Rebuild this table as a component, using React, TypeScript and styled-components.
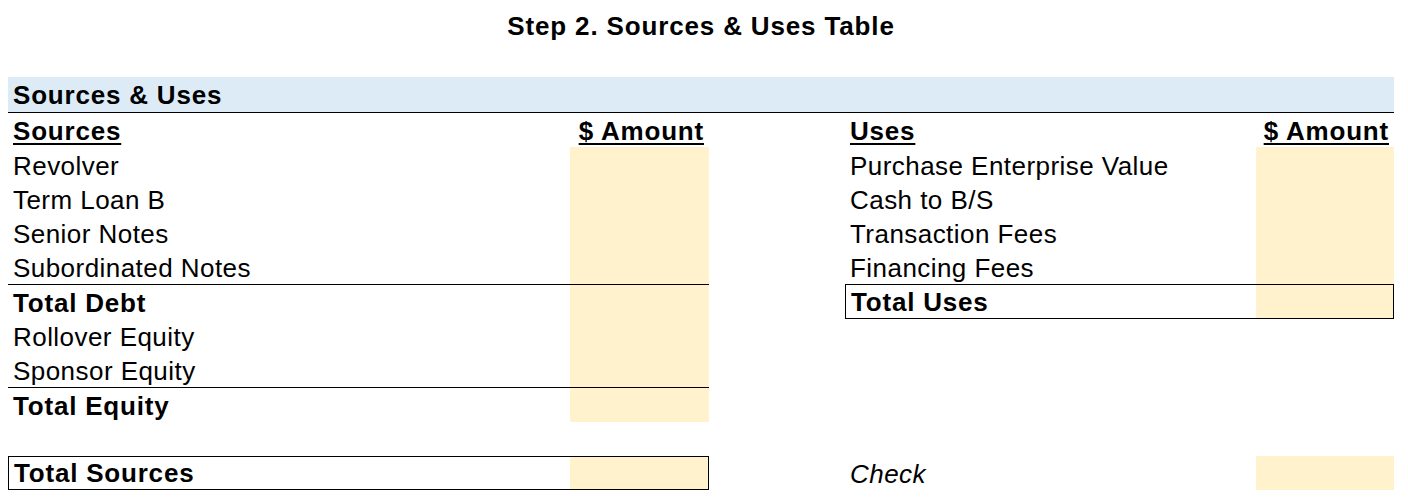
import styled, { createGlobalStyle } from "styled-components";

const GlobalStyle = createGlobalStyle`
    body {
        margin: 0;
        background: #ffffff;
        font-family: "Liberation Sans", Arial, sans-serif;
        color: #000000;
    }
`;

const Page = styled.div`
    width: 1408px;
    height: 504px;
    padding: 0 8px;
    box-sizing: border-box;
`;

const Title = styled.h1`
    margin: 0;
    width: 1386px;
    height: 77px;
    padding-top: 12px;
    box-sizing: border-box;
    text-align: center;
    font-size: 26px;
    line-height: 29px;
    font-weight: 700;
    letter-spacing: 0.85px;
`;

const Band = styled.div`
    width: 1386px;
    height: 36px;
    box-sizing: border-box;
    background: #ddebf7;
    border-bottom: 1px solid #000000;
    display: flex;
    align-items: flex-end;
    padding: 0 0 2px 5px;
    font-size: 26px;
    line-height: 29px;
    font-weight: 700;
    letter-spacing: 0.8px;
`;

const Columns = styled.div`
    display: flex;
    gap: 136px;
`;

const Panel = styled.div<{ $label: number; $amount: number }>`
    display: grid;
    grid-template-columns: ${p => p.$label}px ${p => p.$amount}px;
    grid-auto-rows: 34.3px;
`;

const Row = styled.div<{ $rule?: "top" | "box" }>`
    grid-column: 1 / -1;
    display: grid;
    grid-template-columns: subgrid;
    box-sizing: border-box;
    border-top: ${p => (p.$rule ? "1px solid #000000" : "none")};
    border-left: ${p => (p.$rule === "box" ? "1px solid #000000" : "none")};
    border-right: ${p => (p.$rule === "box" ? "1px solid #000000" : "none")};
    border-bottom: ${p => (p.$rule === "box" ? "1px solid #000000" : "none")};
`;

const Label = styled.div<{ $bold?: boolean; $italic?: boolean; $head?: boolean }>`
    align-self: end;
    padding: 0 0 1px 5px;
    font-size: 26px;
    line-height: 29px;
    white-space: nowrap;
    font-weight: ${p => (p.$bold || p.$head ? 700 : 400)};
    letter-spacing: ${p => (p.$bold || p.$head ? "0.8px" : "0.45px")};
    font-style: ${p => (p.$italic ? "italic" : "normal")};
    text-decoration: ${p => (p.$head ? "underline" : "none")};
    text-decoration-thickness: 2px;
    text-underline-offset: 3px;
`;

const Amount = styled.div<{ $fill?: boolean; $head?: boolean }>`
    background: ${p => (p.$fill ? "#fff2cc" : "transparent")};
    display: flex;
    align-items: flex-end;
    justify-content: flex-end;
    padding: 0 5px 1px 0;
    font-size: 26px;
    line-height: 29px;
    font-weight: 700;
    letter-spacing: 0.8px;
    white-space: nowrap;
    text-decoration: ${p => (p.$head ? "underline" : "none")};
    text-decoration-thickness: 2px;
    text-underline-offset: 3px;
`;

type Line = { label: string; fill?: boolean; bold?: boolean; italic?: boolean; rule?: "top" | "box" };

const sources: Line[] = [
    { label: "Revolver", fill: true },
    { label: "Term Loan B", fill: true },
    { label: "Senior Notes", fill: true },
    { label: "Subordinated Notes", fill: true },
    { label: "Total Debt", fill: true, bold: true, rule: "top" },
    { label: "Rollover Equity", fill: true },
    { label: "Sponsor Equity", fill: true },
    { label: "Total Equity", fill: true, bold: true, rule: "top" },
    { label: "" },
    { label: "Total Sources", fill: true, bold: true, rule: "box" },
];

const uses: Line[] = [
    { label: "Purchase Enterprise Value", fill: true },
    { label: "Cash to B/S", fill: true },
    { label: "Transaction Fees", fill: true },
    { label: "Financing Fees", fill: true },
    { label: "Total Uses", fill: true, bold: true, rule: "box" },
    { label: "" },
    { label: "" },
    { label: "" },
    { label: "" },
    { label: "Check", fill: true, italic: true },
];

const Side = ( { head, lines, label, amount }: { head: string; lines: Line[]; label: number; amount: number } ) =>
{
    return (
        <Panel $label={label} $amount={amount}>
            <Row>
                <Label $head><span>{head}</span></Label>
                <Amount $head>$ Amount</Amount>
            </Row>
            {lines.map( ( l, i ) => (
                <Row key={i} $rule={l.rule}>
                    <Label $bold={l.bold} $italic={l.italic}>{l.label}</Label>
                    <Amount $fill={l.fill} />
                </Row>
            ) )}
        </Panel>
    );
}

const App = () =>
{
    return (
        <Page>
            <GlobalStyle />
            <Title>Step 2. Sources &amp; Uses Table</Title>
            <Band>Sources &amp; Uses</Band>
            <Columns>
                <Side head="Sources" lines={sources} label={562} amount={139} />
                <Side head="Uses" lines={uses} label={411} amount={138} />
            </Columns>
        </Page>
    );
}

export default App;
